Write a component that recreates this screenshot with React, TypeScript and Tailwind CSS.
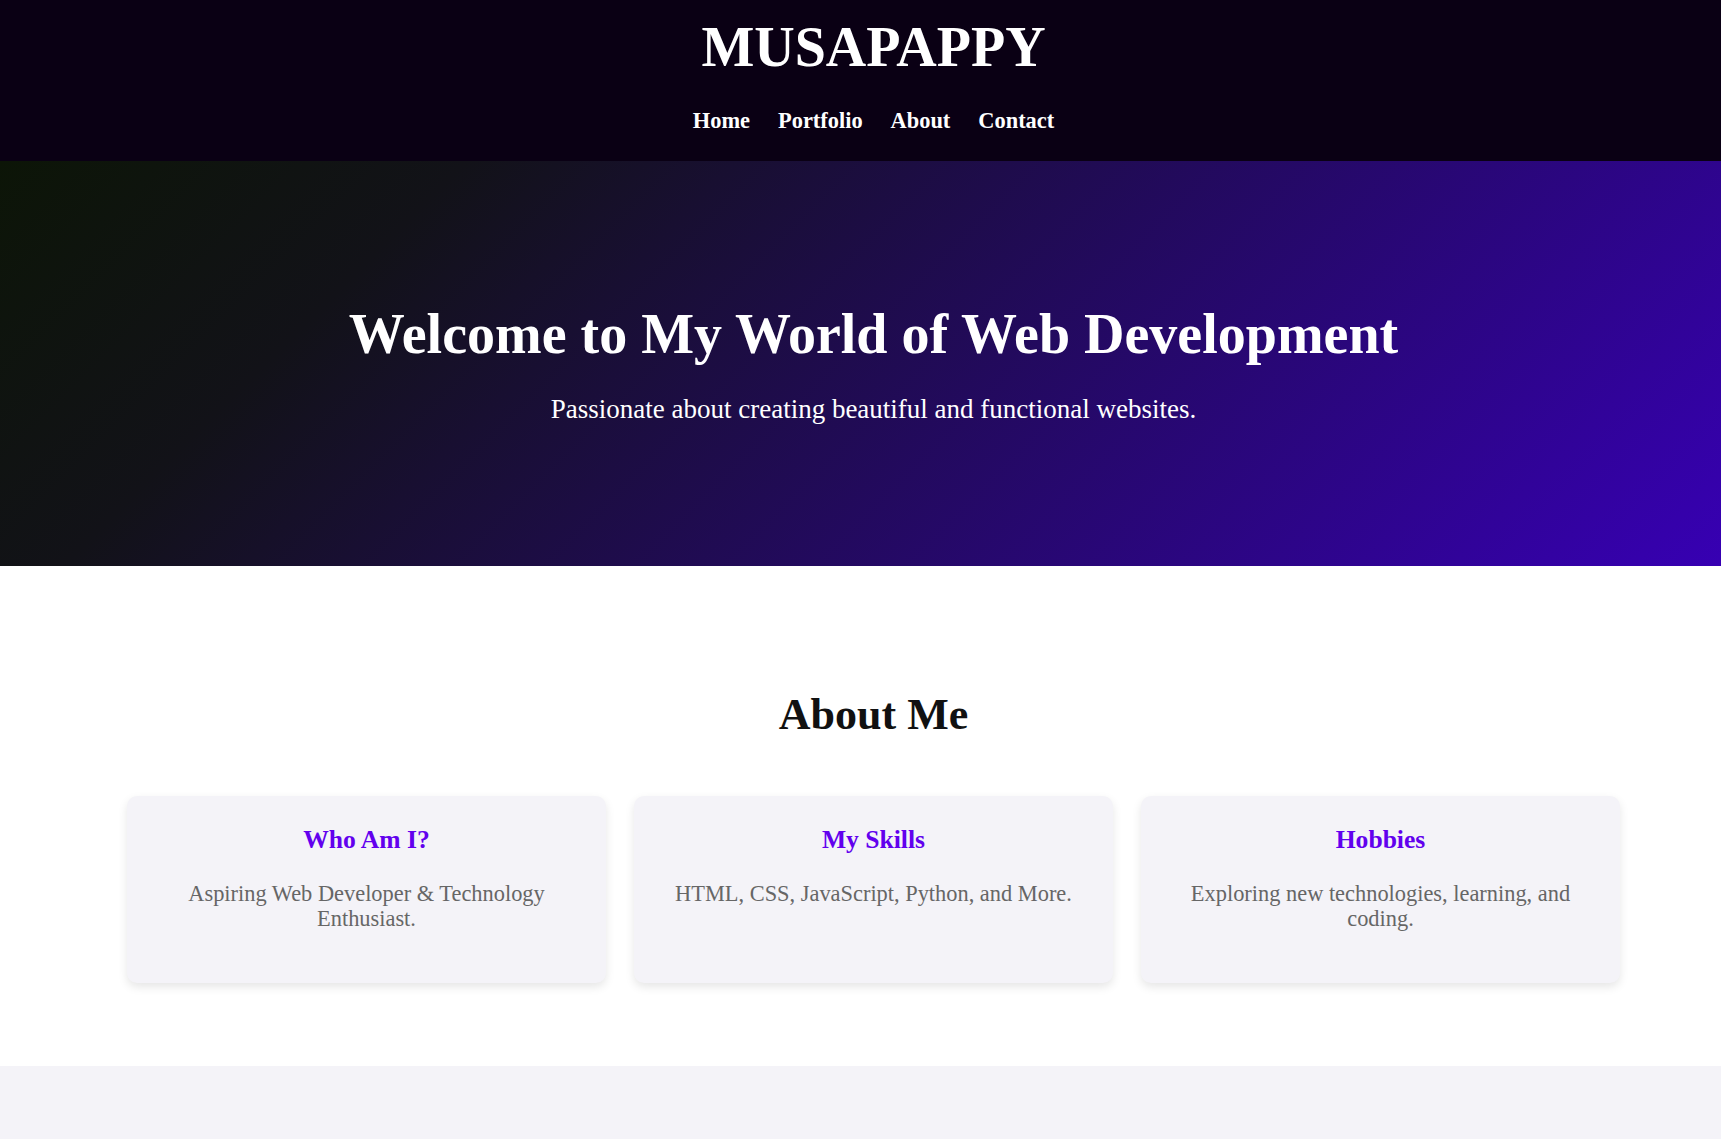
import React from "react";

const cards = [
  { title: "Who Am I?", text: "Aspiring Web Developer & Technology Enthusiast." },
  { title: "My Skills", text: "HTML, CSS, JavaScript, Python, and More." },
  { title: "Hobbies", text: "Exploring new technologies, learning, and coding." },
];

export default function App() {
  return (
    <div className="min-h-[1139px] bg-[#f4f3f8] font-['Liberation_Serif','Times_New_Roman',serif]">
      <header className="bg-[#0a0014] pl-[26px] pt-[16px] pb-[27px] text-center text-white">
        <h1 className="text-[56px] font-bold leading-[62px]">MUSAPAPPY</h1>
        <nav className="mt-[30px] flex justify-center gap-[28px] text-[22.4px] font-bold leading-[26px]">
          <a href="#">Home</a>
          <a href="#">Portfolio</a>
          <a href="#">About</a>
          <a href="#">Contact</a>
        </nav>
      </header>

      <section className="bg-[linear-gradient(135deg,#0c1507_0%,#121218_22%,#3700b3_100%)] pl-[26px] py-[141px] text-center text-white">
        <h2 className="text-[56px] font-bold leading-[64px]">Welcome to My World of Web Development</h2>
        <p className="mt-[28px] text-[27px] leading-[31px]">Passionate about creating beautiful and functional websites.</p>
      </section>

      <section className="bg-white pl-[26px] pt-[123px] pb-[83px] text-center">
        <h2 className="text-[44px] font-bold leading-[51px] text-[#111111]">About Me</h2>
        <div className="mx-auto mt-[56px] grid w-[1493px] grid-cols-3 gap-[28px]">
          {cards.map((c) => (
            <div
              key={c.title}
              className="rounded-[10px] bg-[#f4f3f8] px-[30px] pt-[29px] pb-[52px] shadow-[0_4px_10px_rgba(0,0,0,0.1)]"
            >
              <h3 className="text-[25.6px] font-bold leading-[29px] text-[#6200ee]">{c.title}</h3>
              <p className="mt-[27px] text-[22.4px] leading-[25px] text-[#666666]">{c.text}</p>
            </div>
          ))}
        </div>
      </section>

      <section className="h-[73px] bg-[#f4f3f8]" />
    </div>
  );
}
